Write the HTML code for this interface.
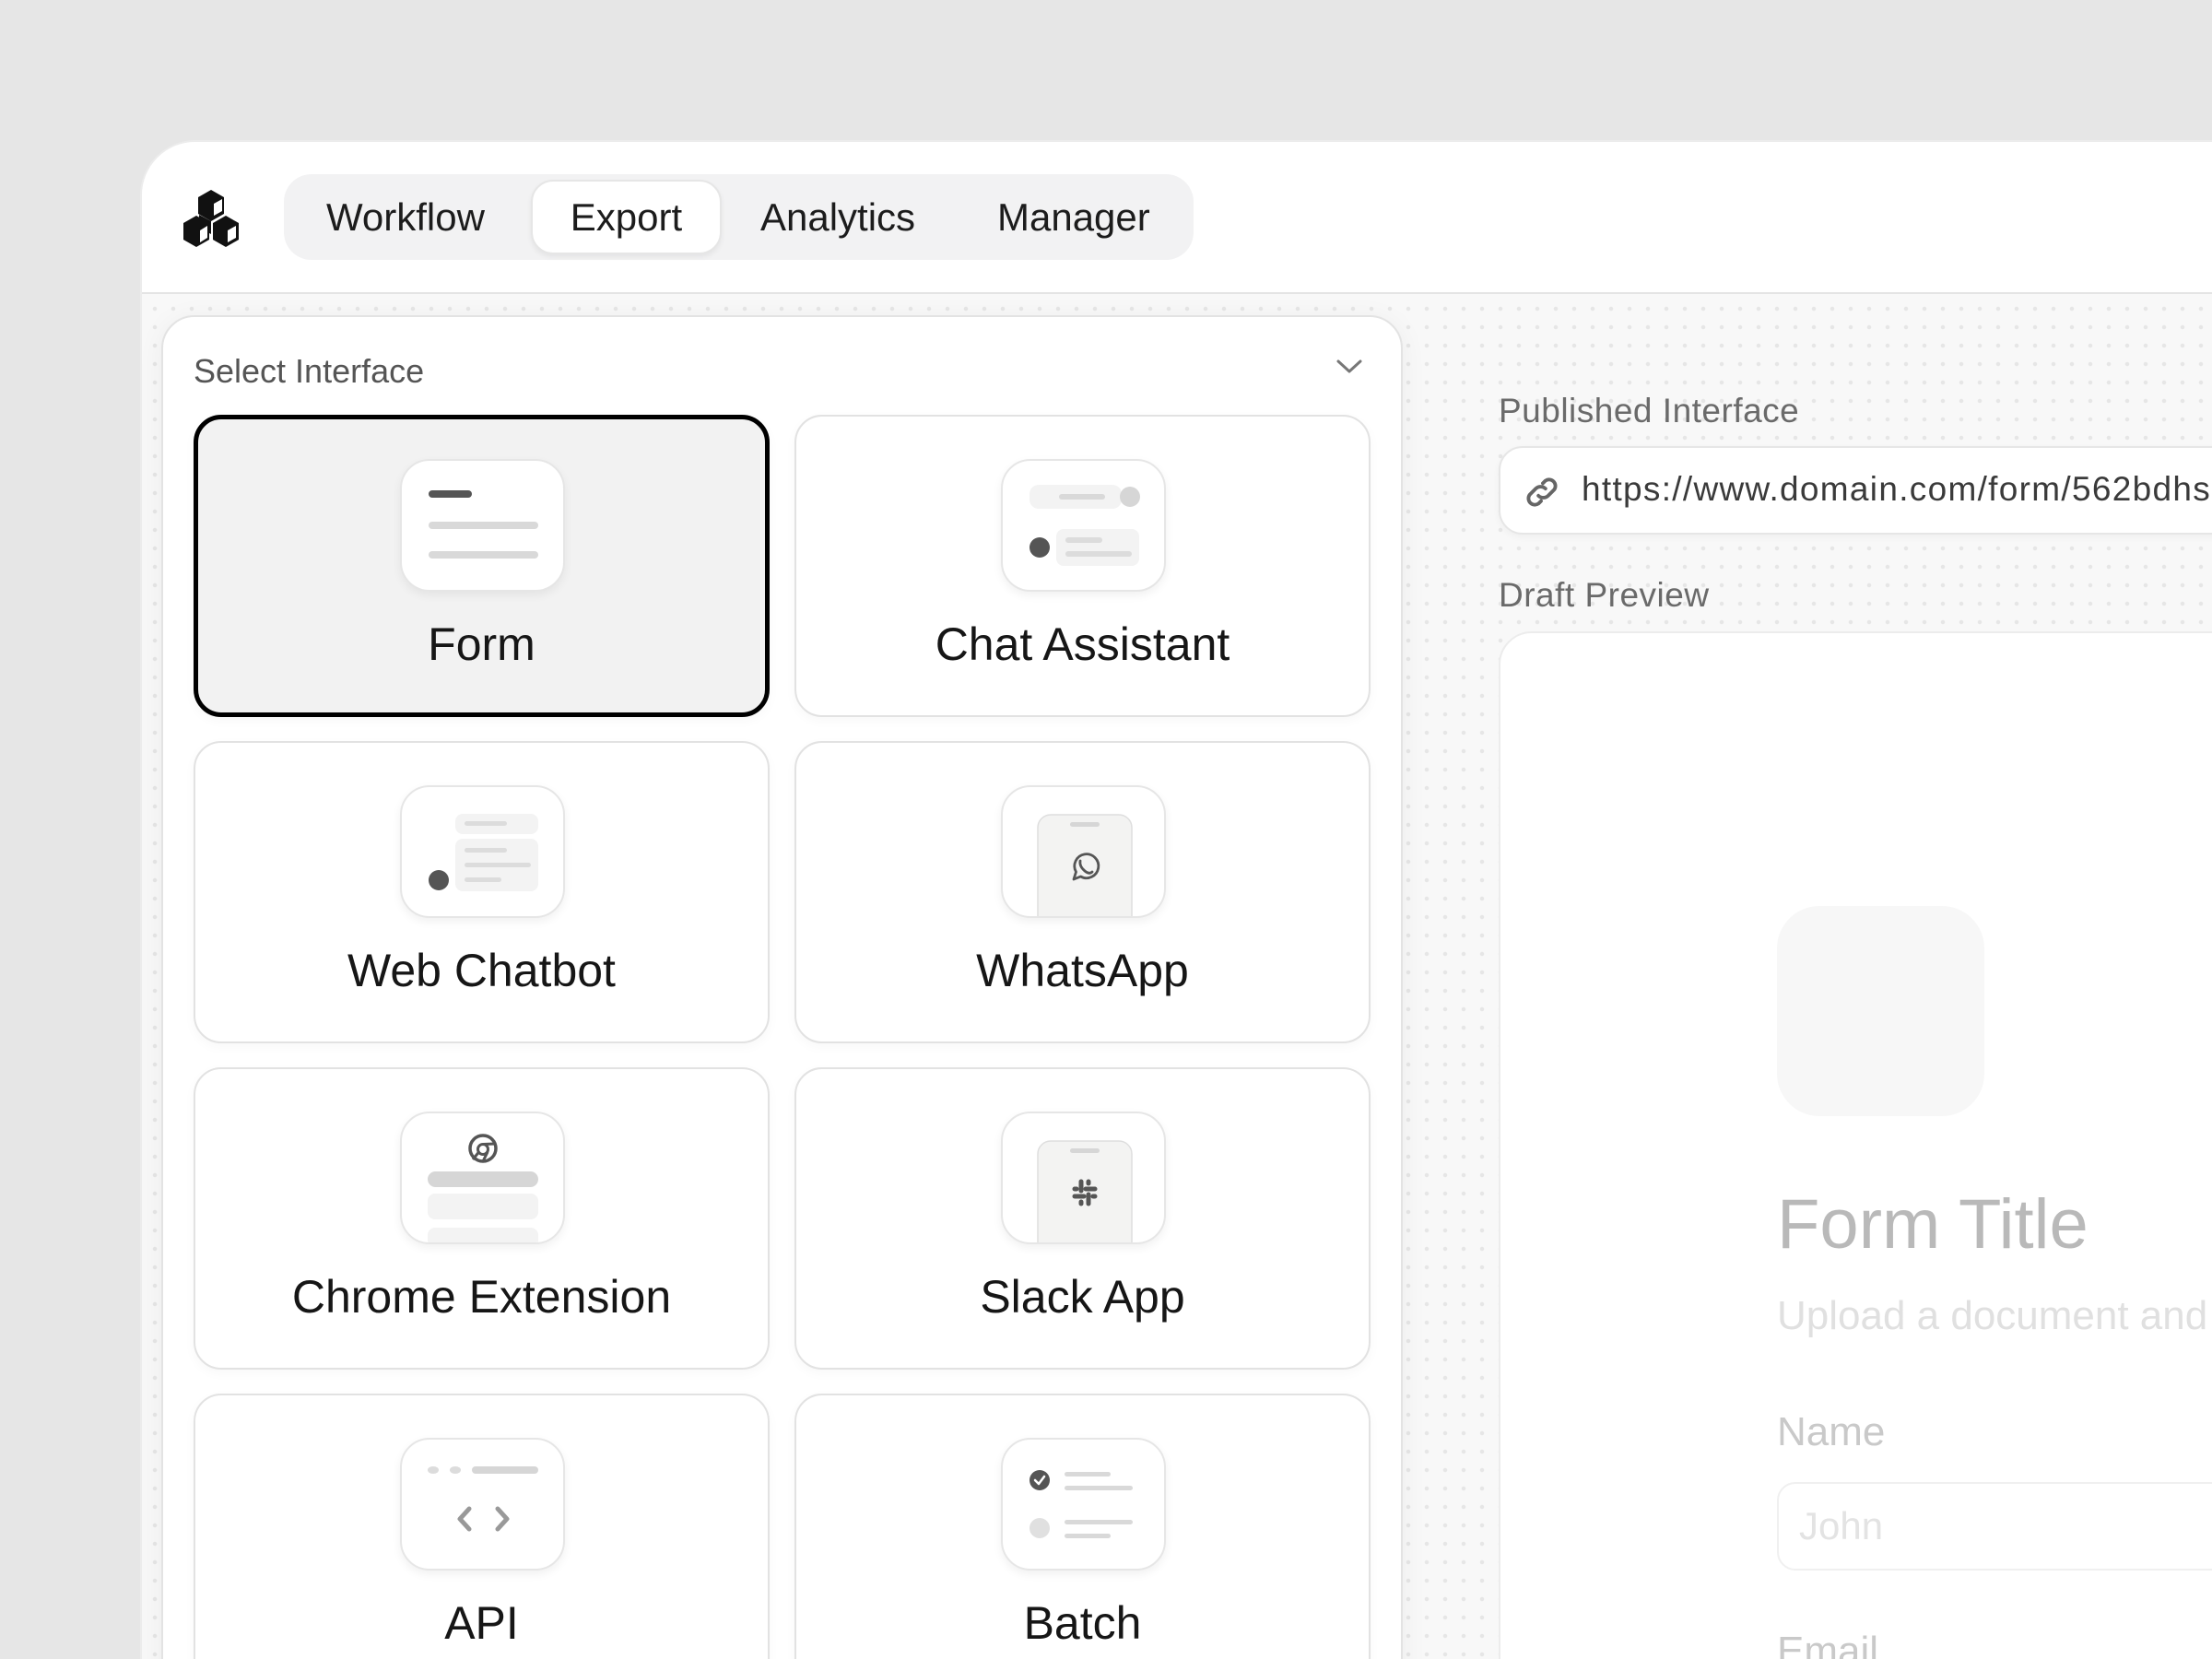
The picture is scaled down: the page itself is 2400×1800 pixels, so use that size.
<!DOCTYPE html>
<html><head><meta charset="utf-8"><style>
*{box-sizing:border-box;margin:0;padding:0}
html,body{width:2400px;height:1800px;overflow:hidden}
body{background:#e6e6e6;font-family:"Liberation Sans",sans-serif;position:relative}
.win{position:absolute;left:152px;top:152px;width:2248px;height:1648px;background:#fff;border-radius:60px 0 0 0;border:2px solid #ececec;border-right:none;border-bottom:none;overflow:hidden}
.header{position:absolute;left:0;top:0;right:0;height:165px;background:#fff;border-bottom:2px solid #e4e4e4;box-shadow:0 2px 6px rgba(0,0,0,.04)}
.content{position:absolute;left:0;top:165px;right:0;bottom:0;background-color:#f8f8f8;background-image:radial-gradient(circle,#e6e6e6 2px,transparent 2.5px);background-size:20px 20px;background-position:4px 6px}
.tabs{position:absolute;left:154px;top:35px;width:987px;height:93px;background:#f2f2f3;border-radius:30px}
.tab{position:absolute;top:0;height:93px;line-height:93px;font-size:42px;color:#1c1c1c}
.tab.sel{top:6px;height:81px;line-height:77px;background:#fff;border-radius:24px;border:2px solid #e6e6e6;box-shadow:0 3px 6px rgba(0,0,0,.06);text-align:center}
.panel{position:absolute;left:21px;top:23px;width:1347px;height:1600px;background:#fff;border:2px solid #e3e3e3;border-radius:36px;box-shadow:0 4px 30px rgba(0,0,0,.05)}
.card{position:absolute;width:625px;height:328px;background:#fff;border:2px solid #e2e2e2;border-radius:30px;box-shadow:0 4px 12px rgba(0,0,0,.03)}
.card.sel{background:#f2f2f2;border:5px solid #000}
.ib{position:absolute;left:222px;top:46px;width:179px;height:144px;background:#fff;border:2px solid #e6e6e6;border-radius:32px;box-shadow:0 4px 10px rgba(0,0,0,.06);overflow:hidden}
.card.sel .ib{left:219px;top:43px}
.ib svg{display:block}
.lbl{position:absolute;left:0;right:0;top:218px;text-align:center;font-size:50px;color:#161616}
.card.sel .lbl{top:215px}
.rlabel{position:absolute;font-size:37px;color:#6a6a6a;letter-spacing:.5px}
</style></head><body>
<div class="win">
 <div class="header">
  <svg style="position:absolute;left:42px;top:48px" width="66" height="70" viewBox="0 0 66 70">
   <polygon points="33,4 47,12 47,30 33,38 19,30 19,12" fill="#111"/>
   <polygon points="17,32 31,40 31,58 17,66 3,58 3,40" fill="#111"/>
   <polygon points="49,32 63,40 63,58 49,66 35,58 35,40" fill="#111"/>
   <polygon points="20,31 33,38 33,52 20,45" fill="#111"/>
   <polygon points="36,19 45,14 45,27 36,32" fill="#fff"/>
   <polygon points="21,48 29,43 29,56 21,61" fill="#fff"/>
   <polygon points="51,48 60,43 60,56 51,61" fill="#fff"/>
  </svg>
  <div class="tabs">
   <div class="tab" style="left:46px">Workflow</div>
   <div class="tab sel" style="left:268px;width:207px">Export</div>
   <div class="tab" style="left:517px">Analytics</div>
   <div class="tab" style="left:774px">Manager</div>
  </div>
 </div>
 <div class="content">
  <div class="panel">
   <div style="position:absolute;left:33px;top:38px;font-size:36px;color:#555">Select Interface</div>
   <svg style="position:absolute;left:1272px;top:44px" width="30" height="20" viewBox="0 0 30 20"><path d="M3 4 L15 15 L27 4" fill="none" stroke="#777" stroke-width="3" stroke-linecap="round" stroke-linejoin="round"/></svg>

   <div class="card sel" style="left:33px;top:106px"><div class="ib"><svg width="177" height="142">
    <rect x="29" y="32" width="47" height="8" rx="4" fill="#555"/>
    <rect x="29" y="66" width="119" height="8" rx="4" fill="#d9d9d9"/>
    <rect x="29" y="98" width="119" height="8" rx="4" fill="#d9d9d9"/></svg></div><div class="lbl">Form</div></div>

   <div class="card" style="left:685px;top:106px"><div class="ib"><svg width="177" height="142">
    <rect x="29" y="26" width="100" height="26" rx="10" fill="#f3f3f3"/>
    <rect x="61" y="36" width="50" height="6" rx="3" fill="#d9d9d9"/>
    <circle cx="138" cy="39" r="11" fill="#d6d6d6"/>
    <rect x="58" y="74" width="90" height="40" rx="8" fill="#f3f3f3"/>
    <rect x="68" y="83" width="40" height="6" rx="3" fill="#dcdcdc"/>
    <rect x="68" y="98" width="72" height="6" rx="3" fill="#dcdcdc"/>
    <circle cx="40" cy="94" r="11" fill="#555"/></svg></div><div class="lbl">Chat Assistant</div></div>

   <div class="card" style="left:33px;top:460px"><div class="ib"><svg width="177" height="142">
    <rect x="58" y="29" width="90" height="22" rx="8" fill="#f3f3f3"/>
    <rect x="68" y="37" width="46" height="5" rx="2.5" fill="#dcdcdc"/>
    <rect x="58" y="56" width="90" height="57" rx="8" fill="#f3f3f3"/>
    <rect x="68" y="66" width="46" height="5" rx="2.5" fill="#dcdcdc"/>
    <rect x="68" y="82" width="72" height="5" rx="2.5" fill="#dcdcdc"/>
    <rect x="68" y="98" width="40" height="5" rx="2.5" fill="#dcdcdc"/>
    <circle cx="40" cy="101" r="11" fill="#555"/></svg></div><div class="lbl">Web Chatbot</div></div>

   <div class="card" style="left:685px;top:460px"><div class="ib"><svg width="177" height="142">
    <rect x="38" y="30" width="102" height="130" rx="14" fill="#f3f3f2" stroke="#dedede" stroke-width="1.5"/>
    <rect x="73" y="38" width="32" height="5" rx="2.5" fill="#d6d6d6"/>
    <path d="M77 100 L79.5 92 A13 13 0 1 1 84.5 97 Z" fill="none" stroke="#555" stroke-width="2.8" stroke-linejoin="round"/>
    <path d="M84 80 Q83 86 89 91 Q94 95 97 92" fill="none" stroke="#555" stroke-width="2.8" stroke-linecap="round"/></svg></div><div class="lbl">WhatsApp</div></div>

   <div class="card" style="left:33px;top:814px"><div class="ib"><svg width="177" height="142">
    <circle cx="88" cy="38" r="14" fill="none" stroke="#555" stroke-width="3.5"/>
    <circle cx="88" cy="39" r="5.5" fill="none" stroke="#555" stroke-width="3"/>
    <path d="M88 33.5 L101 33 M83.5 42 L77 50 M93 42 L88 52" stroke="#555" stroke-width="3"/>
    <rect x="28" y="63" width="120" height="17" rx="8.5" fill="#d6d6d6"/>
    <rect x="28" y="87" width="120" height="28" rx="8" fill="#f3f3f3"/>
    <rect x="28" y="124" width="120" height="30" rx="8" fill="#f3f3f3"/></svg></div><div class="lbl">Chrome Extension</div></div>

   <div class="card" style="left:685px;top:814px"><div class="ib"><svg width="177" height="142">
    <rect x="38" y="30" width="102" height="130" rx="14" fill="#f3f3f2" stroke="#dedede" stroke-width="1.5"/>
    <rect x="73" y="38" width="32" height="5" rx="2.5" fill="#d6d6d6"/>
    <g stroke="#555" stroke-width="5" stroke-linecap="round">
     <line x1="85" y1="74" x2="85" y2="84"/><line x1="93" y1="88" x2="93" y2="98"/>
     <line x1="78" y1="90" x2="88" y2="90"/><line x1="90" y1="82" x2="100" y2="82"/>
     <line x1="78" y1="82" x2="80" y2="82"/><line x1="98" y1="90" x2="100" y2="90"/>
     <line x1="93" y1="74" x2="93" y2="76"/><line x1="85" y1="96" x2="85" y2="98"/></g></svg></div><div class="lbl">Slack App</div></div>

   <div class="card" style="left:33px;top:1168px"><div class="ib"><svg width="177" height="142">
    <ellipse cx="34" cy="33" rx="6" ry="4" fill="#dcdcdc"/><ellipse cx="58" cy="33" rx="6" ry="4" fill="#dcdcdc"/>
    <rect x="76" y="29" width="72" height="8" rx="4" fill="#d6d6d6"/>
    <path d="M73 75 L63 86 L73 97 M104 75 L114 86 L104 97" fill="none" stroke="#999" stroke-width="5" stroke-linecap="round" stroke-linejoin="round"/></svg></div><div class="lbl">API</div></div>

   <div class="card" style="left:685px;top:1168px"><div class="ib"><svg width="177" height="142">
    <circle cx="40" cy="44" r="11" fill="#555"/>
    <path d="M35 44 L39 48 L45 40" fill="none" stroke="#fff" stroke-width="2.5" stroke-linecap="round" stroke-linejoin="round"/>
    <rect x="67" y="35" width="50" height="5" rx="2.5" fill="#d9d9d9"/>
    <rect x="67" y="50" width="74" height="5" rx="2.5" fill="#d9d9d9"/>
    <circle cx="40" cy="96" r="11" fill="#e0e0e0"/>
    <rect x="67" y="87" width="74" height="5" rx="2.5" fill="#d9d9d9"/>
    <rect x="67" y="102" width="50" height="5" rx="2.5" fill="#d9d9d9"/></svg></div><div class="lbl">Batch</div></div>
  </div>

  <div class="rlabel" style="left:1472px;top:106px">Published Interface</div>
  <div style="position:absolute;left:1472px;top:165px;width:1000px;height:96px;background:#fff;border:2px solid #e6e6e6;border-radius:26px;box-shadow:0 3px 8px rgba(0,0,0,.04)">
   <svg style="position:absolute;left:22px;top:25px" width="46" height="46" viewBox="0 0 24 24"><g fill="none" stroke="#666" stroke-width="2" stroke-linecap="round"><path d="M10 14 A4 4 0 0 0 15.5 14 L19 10.5 A3.6 3.6 0 0 0 14 5.5 L12.5 7"/><path d="M14 10 A4 4 0 0 0 8.5 10 L5 13.5 A3.6 3.6 0 0 0 10 18.5 L11.5 17"/></g></svg>
   <div style="position:absolute;left:88px;top:24px;font-size:37px;letter-spacing:1.3px;color:#3a3a3a;white-space:nowrap">https://www.domain.com/form/562bdhsg</div>
  </div>
  <div class="rlabel" style="left:1472px;top:306px">Draft Preview</div>
  <div style="position:absolute;left:1472px;top:366px;width:1000px;height:1400px;background:#fff;border:2px solid #ececec;border-radius:36px">
   <div style="position:absolute;left:300px;top:296px;width:225px;height:228px;background:#f7f7f7;border-radius:46px"></div>
   <div style="position:absolute;left:300px;top:598px;font-size:76px;color:#b9b9b9">Form Title</div>
   <div style="position:absolute;left:300px;top:716px;font-size:44px;color:#e0e0e0;white-space:nowrap">Upload a document and</div>
   <div style="position:absolute;left:300px;top:842px;font-size:44px;color:#c9c9c9">Name</div>
   <div style="position:absolute;left:300px;top:921px;width:700px;height:96px;border:2px solid #f0f0f0;border-radius:20px">
    <div style="position:absolute;left:22px;top:22px;font-size:42px;color:#e3e3e3">John</div></div>
   <div style="position:absolute;left:300px;top:1080px;font-size:44px;color:#c9c9c9">Email</div>
  </div>
 </div>
</div>
</body></html>
